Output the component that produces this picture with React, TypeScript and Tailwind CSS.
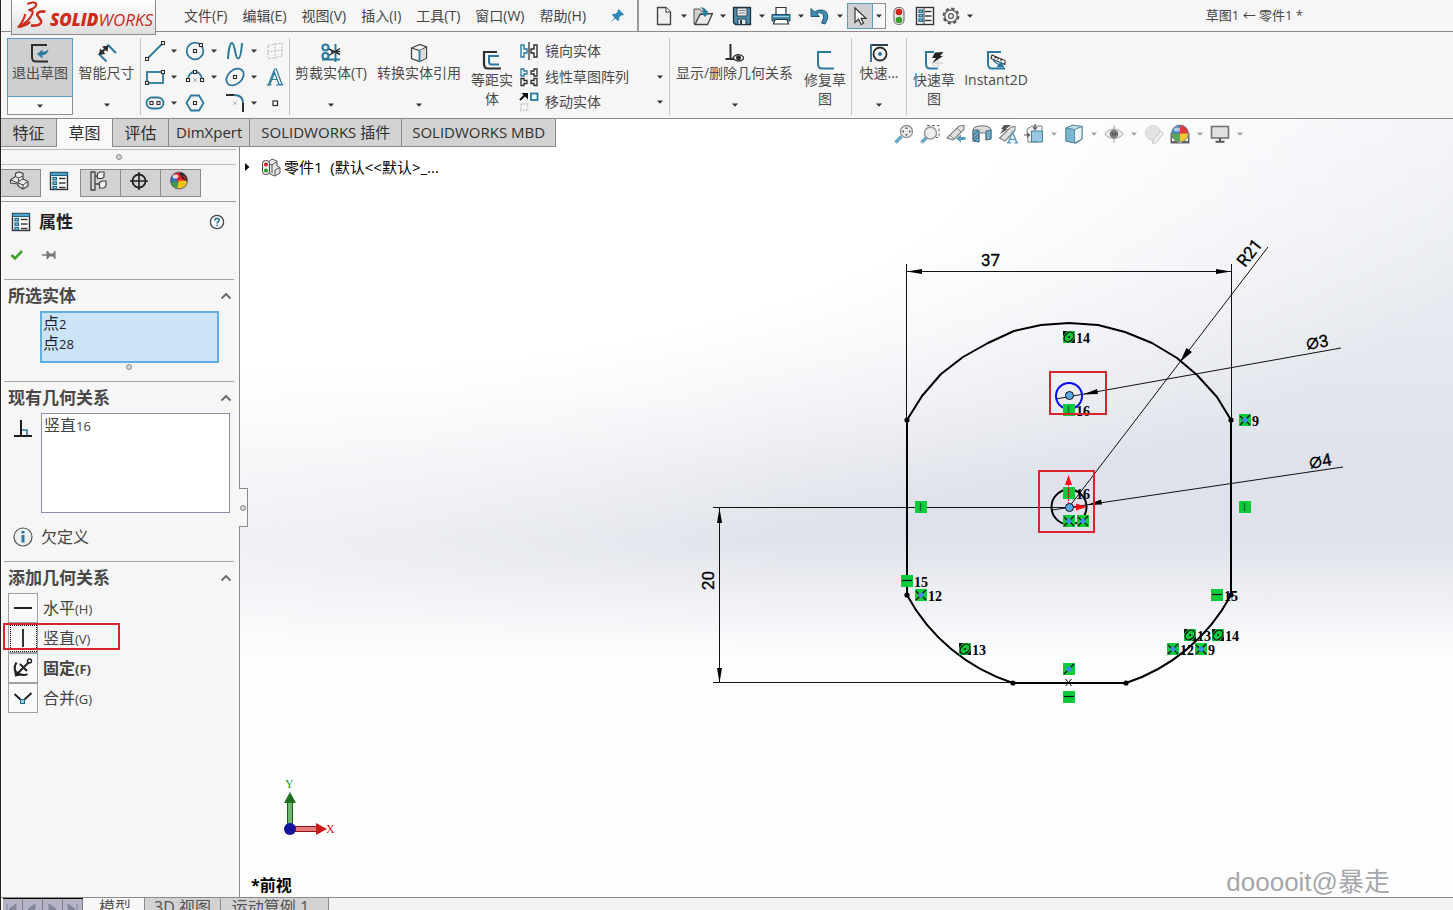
import React from "react";

const BLUE = "#2b7a9e";
const INK = "#2d2d2d";

type IconProps = { w?: number; h?: number; box?: string; children: React.ReactNode };

function Svg({ w = 20, h = 20, box, children }: IconProps) {
  return (
    <svg width={w} height={h} viewBox={box ?? `0 0 ${w} ${h}`} fill="none" aria-hidden="true" className="shrink-0">
      {children}
    </svg>
  );
}

function Caret({ light = false }: { light?: boolean }) {
  return (
    <svg width="6" height="4" viewBox="0 0 6 4" aria-hidden="true" className="shrink-0">
      <path d="M0 0.5h6L3 3.8z" fill={light ? "#9a9a9a" : "#333"} />
    </svg>
  );
}

function Handle({ x, y }: { x: number; y: number }) {
  return <rect x={x - 1.5} y={y - 1.5} width="3" height="3" fill="#fff" stroke={INK} strokeWidth="1.1" />;
}

/* ---------- quick access icons ---------- */

const NewIcon = () => (
  <Svg>
    <path d="M3.5 1.500h8.500l4.500 4.500v12.500h-13z" fill="#efefef" stroke="#444" strokeWidth="1.400" />
    <path d="M12 1.500v4.500h4.500" stroke="#444" strokeWidth="1.100" fill="#fff" />
  </Svg>
);
const OpenIcon = () => (
  <Svg>
    <path d="M1 3h6l1.500 2H14v3H7L2.500 18H1z" fill="#cfcfcf" stroke="#555" />
    <path d="M2 18.500 7 8.500l12.500-1-5 11z" fill="#ececec" stroke="#444" strokeWidth="1.300" />
    <path d="M7 1.500c4-.5 6.500 1.500 6.500 5H16l-4 4.500-4-4.500h2.500c0-2.500-1-3.800-3.500-5z" fill={BLUE} />
  </Svg>
);
const SaveIcon = () => (
  <Svg>
    <path d="M1.500 1.500h17v17h-15l-2-2z" fill="#4b8fae" stroke="#222e38" strokeWidth="1.300" />
    <rect x="5" y="2" width="10" height="8" fill="#eef2f4" stroke="#2a3d4a" />
    <path d="M6.500 4.500h7M6.500 7h7" stroke="#777" />
    <rect x="6" y="13" width="8" height="5.500" fill="#dfe6ea" stroke="#2a3d4a" />
    <rect x="8" y="14" width="2" height="4" fill="#2a3d4a" />
  </Svg>
);
const PrintIcon = () => (
  <Svg>
    <path d="M5 1.500h10v7H5z" fill="#fff" stroke="#333" strokeWidth="1.200" />
    <path d="M1 8.500h18v6.500H1z" fill="#3d87aa" stroke="#1f4a60" />
    <path d="M2 10.500h16" stroke="#9ed0e6" />
    <path d="M4 13.500h12l1.500 4.500h-15z" fill="#fff" stroke="#333" strokeWidth="1.200" />
  </Svg>
);
const UndoIcon = () => (
  <Svg>
    <path d="M1 2.500v8h8.500L6.500 7.500c4.500-2 8.500.5 6.500 6L11.500 17l3.500 1c4.500-6.500 3.500-14-4-14-2.500 0-4.500.8-6.500 2z" fill="#3f8db1" stroke="#1e5672" />
  </Svg>
);
const CursorIcon = () => (
  <Svg>
    <path d="M5 2v14.500l3.500-3.200 2.600 5.200 2.400-1.200-2.500-5H16z" fill="#fff" stroke="#333" strokeWidth="1.200" />
  </Svg>
);
const TrafficIcon = () => (
  <Svg>
    <rect x="5" y="1.500" width="10" height="17" rx="4.500" fill="#e9e9e9" stroke="#777" strokeWidth="1.200" />
    <circle cx="10" cy="6" r="3.300" fill="#d0271d" />
    <circle cx="10" cy="14" r="3.300" fill="#3d9a2f" />
  </Svg>
);
function ListIcon({ blueTop = false }: { blueTop?: boolean }) {
  return (
    <Svg>
      <rect x="1.500" y="1.500" width="17" height="17" fill="#fafafa" stroke="#333" strokeWidth="1.400" />
      {blueTop ? <path d="M1.500 1.500h17v3h-17z" fill="#4ea3c6" stroke="#22607c" /> : <path d="M9 2v16" stroke="#333" />}
      {[5, 9.5, 14].map((y) => (
        <g key={y}>
          <rect x="4" y={y + (blueTop ? 1.5 : -1)} width="3.500" height="2.400" fill="#9ed0e6" stroke="#1f6b8c" strokeWidth="1.200" />
          <path d={`M10 ${y + (blueTop ? 2.5 : 0.5)}h6.500`} stroke="#333" strokeWidth="1.400" />
        </g>
      ))}
    </Svg>
  );
}
const GearIcon = () => (
  <Svg>
    <circle cx="10" cy="10" r="7.400" stroke="#555" strokeWidth="2" strokeDasharray="3.300 2.510" />
    <circle cx="10" cy="10" r="6.200" stroke="#555" strokeWidth="1.200" fill="#f5f5f5" />
    <circle cx="10" cy="10" r="2.400" stroke="#555" strokeWidth="1.200" />
  </Svg>
);

/* ---------- ribbon icons ---------- */

const ExitSketchIcon = () => (
  <Svg>
    <path d="M17 2H2v12c0 3 1 4.500 4 4.500h12" stroke={INK} strokeWidth="2" />
    <path d="M18.500 6c-.5 4-2.500 6-6 6v3.500L7 11l5.500-4.500V9c2.500 0 4-.8 6-3z" fill={BLUE} />
  </Svg>
);
const DimensionIcon = () => (
  <Svg>
    <path d="M10.500 1.500 19 10M1.500 10.500l8 8" stroke={BLUE} strokeWidth="2" />
    <path d="m4 10 6-6" stroke={INK} strokeWidth="2.400" />
    <path d="M11.500 2.500 10.500 9 5 3.500zM2 12l1-6.500L8.500 11z" fill={INK} />
  </Svg>
);
const LineIcon = () => (
  <Svg>
    <path d="M2 18 18 2" stroke={BLUE} strokeWidth="1.800" />
    <Handle x={2} y={18} />
    <Handle x={18} y={2} />
  </Svg>
);
const CircleIcon = () => (
  <Svg>
    <circle cx="10" cy="10" r="8.300" stroke={BLUE} strokeWidth="1.800" />
    <Handle x={10} y={10} />
    <Handle x={16} y={4} />
  </Svg>
);
const SplineIcon = () => (
  <Svg>
    <path d="M3 18C3.500 9 5 2 7 2c3 0 3 15.500 6 15.500 2.500 0 3.500-8 4-15.500" stroke={BLUE} strokeWidth="2" />
  </Svg>
);
const PlaneIcon = () => (
  <Svg>
    <path d="M3 4.500 17 2v13L3 18zM10 2v16M2 11l16-2" stroke="#b8b8b8" strokeDasharray="2 1.500" />
  </Svg>
);
const RectIcon = () => (
  <Svg>
    <rect x="2" y="5" width="16" height="11" stroke={BLUE} strokeWidth="1.800" />
    <Handle x={2} y={16} />
    <Handle x={18} y={5} />
  </Svg>
);
const ArcIcon = () => (
  <Svg>
    <path d="M3 13C3 2 17 2 17 13" stroke={BLUE} strokeWidth="1.800" />
    <path d="m8 11 4 4M12 11l-4 4" stroke="#aaa" strokeWidth="1" />
    <Handle x={3} y={13} />
    <Handle x={17} y={13} />
    <Handle x={10} y={5} />
  </Svg>
);
const EllipseIcon = () => (
  <Svg>
    <ellipse cx="10" cy="10" rx="9.800" ry="7" transform="rotate(-42 10 10)" stroke={BLUE} strokeWidth="1.800" />
    <Handle x={10} y={10} />
  </Svg>
);
const LetterAIcon = () => (
  <Svg>
    <path d="M1.500 18h5M11 18h7.500M3.500 17.500 9.500 2h1.800L17 17.500h-3L9.500 5.500 5 17.500zM6.500 12.500h6" stroke={BLUE} strokeWidth="1.200" />
  </Svg>
);
const SlotIcon = () => (
  <Svg>
    <rect x="1.500" y="4.500" width="17" height="11" rx="5.500" stroke={BLUE} strokeWidth="1.800" />
    <Handle x={6.5} y={10} />
    <Handle x={13.5} y={10} />
  </Svg>
);
const PolygonIcon = () => (
  <Svg>
    <path d="m6 2.500h8L18.500 10 14 17.500H6L1.500 10z" stroke={BLUE} strokeWidth="1.800" />
    <Handle x={10} y={10} />
  </Svg>
);
const FilletIcon = () => (
  <Svg>
    <path d="M1 2h8" stroke={INK} strokeWidth="2" />
    <path d="M9 2c6 0 9 3 9 8" stroke={BLUE} strokeWidth="2" />
    <path d="M18 10v9" stroke={INK} strokeWidth="2" />
    <path d="m8 8 4 4m0-4-4 4" stroke="#bbb" />
  </Svg>
);
const PointIcon = () => (
  <Svg>
    <rect x="8" y="8" width="4.500" height="4.500" fill="#fff" stroke={INK} strokeWidth="1.200" />
  </Svg>
);
const TrimIcon = () => (
  <Svg>
    <path d="M1 16.500h18M14.500 1v18" stroke={BLUE} strokeWidth="2" />
    <path d="m7 5.500 12 6M7 13l12-7.500M10 9l9-.5" stroke={INK} strokeWidth="1.400" />
    <circle cx="4.500" cy="4.500" r="3" stroke={BLUE} strokeWidth="2.200" />
    <circle cx="4.500" cy="13" r="3" stroke={BLUE} strokeWidth="2.200" fill="#f6f6f6" />
  </Svg>
);
const CubeIcon = () => (
  <Svg>
    <path d="M2.500 5 11 1.500 17.500 4v11l-7 3.500-8-3z" fill="#f4f4f4" stroke="#444" strokeWidth="1.300" />
    <path d="m2.500 5 8 2.500L17.500 4" stroke="#444" strokeWidth="1.200" />
    <path d="M10.500 7.500V18l6.500-3V5z" fill="#dcdcdc" />
    <path d="M10.500 7.500v11" stroke={BLUE} strokeWidth="1.800" />
  </Svg>
);
const OffsetIcon = () => (
  <Svg>
    <path d="M15 2H2v12c0 3 1 4.500 4 4.500h13" stroke={INK} strokeWidth="2.200" />
    <path d="M17 6H7v5.500c0 2 .5 3 2.500 3H17" stroke={BLUE} strokeWidth="2" />
  </Svg>
);
const MirrorIcon = () => (
  <Svg>
    <path d="M2 4h3v4h3v4H5v4H2z" stroke={BLUE} strokeWidth="1.400" />
    <path d="M10 1v18" stroke="#222" strokeWidth="1.200" />
    <path d="M18 4h-3v4h-3v4h3v4h3z" stroke={INK} strokeWidth="1.400" />
  </Svg>
);
const PatternIcon = () => (
  <Svg>
    <path d="M2 2h3v2h3v3H5v2H2z" stroke={BLUE} strokeWidth="1.300" />
    <path d="M18 2h-3v2h-3v3h3v2h3zM2 11.500h3v2h3v3H5v2H2zM18 11.500h-3v2h-3v3h3v2h3z" stroke={INK} strokeWidth="1.300" />
  </Svg>
);
const MoveIcon = () => (
  <Svg>
    <path d="m1 8 5-5" stroke="#111" strokeWidth="2" />
    <path d="M2.500 1H9v6.500z" fill="#111" />
    <rect x="12" y="1.500" width="6.500" height="6.500" stroke={BLUE} strokeWidth="1.800" />
    <rect x="2" y="12" width="6.500" height="6.500" stroke="#c0c0c0" strokeWidth="1.500" strokeDasharray="1.500 1.200" />
  </Svg>
);
const RelationsIcon = () => (
  <Svg>
    <path d="M6.500 1v15.500M1.500 16h9" stroke={INK} strokeWidth="2" />
    <path d="M9 15c2.500-4.500 8.500-4.500 11 0-2.500 4-8.500 4-11 0z" fill="#fff" stroke={INK} strokeWidth="1.300" />
    <circle cx="14.500" cy="14.800" r="2.500" fill={INK} />
  </Svg>
);
const RepairIcon = () => (
  <Svg>
    <path d="M16 2H3v12c0 3 1 4.500 4 4.500h12" stroke={BLUE} strokeWidth="2" />
  </Svg>
);
const SnapIcon = () => (
  <Svg>
    <path d="M1 2h18M2 2v17" stroke={BLUE} strokeWidth="2" />
    <path d="M3 2h16" stroke={INK} strokeWidth="1.500" />
    <circle cx="11" cy="11" r="6.500" stroke={INK} strokeWidth="1.800" />
    <circle cx="11" cy="11" r="2" fill={BLUE} />
  </Svg>
);
const RapidIcon = () => (
  <Svg>
    <path d="M10 2H2v12c0 3 1 4.500 4 4.500h8" stroke={BLUE} strokeWidth="2" />
    <path d="M10 18v-5h9M14 10v9" stroke="#ccc" />
    <path d="M11 2.500 19.500 2l-3.500 4h3L8 13.500l4-5.500H8z" fill="#222" />
  </Svg>
);
const InstantIcon = () => (
  <Svg>
    <path d="M15 2H2v12c0 3 1 4.500 4 4.500h13" stroke={BLUE} strokeWidth="2" />
    <path d="m6 5 13 5.500v4L5 8.500zM9 6.500v2M12 8v2M15 9v2" fill="#fff" stroke={INK} strokeWidth="1.100" />
    <path d="m7 10.500 7 5M12 16.500h5l-2-4z" stroke={BLUE} strokeWidth="1.500" fill={BLUE} />
  </Svg>
);

/* ---------- view toolbar icons ---------- */

const Lens = ({ dashed = false }: { dashed?: boolean }) => (
  <Svg>
    <path d="m1.500 18.500 6-6" stroke="#5da0c0" strokeWidth="3.500" />
    {dashed && <path d="M7 1.500h12v12h-3" stroke="#555" strokeDasharray="3 2" />}
    <circle cx={dashed ? 10.5 : 12.5} cy={dashed ? 9 : 7.5} r="6" fill="#e9ecee" stroke="#8a8a8a" strokeWidth="1.500" />
    {!dashed && <path d="M12.500 2.800 14 5h-3zM12.500 12.200 14 10h-3zM7.800 7.500 10 6v3zM17.200 7.500 15 6v3z" fill="#555" />}
  </Svg>
);
const PreviousViewIcon = () => (
  <Svg>
    <path d="M1 14 13 2l5-.5v4L7 16z" fill="#ddd" stroke="#777" strokeWidth="1.200" />
    <path d="m4 11 4 4M11 4l4 4" stroke="#777" />
    <path d="M10 14.500 15 10.500v2.500h4.500v3H15v2.500z" fill="#4a93b6" />
  </Svg>
);
const SectionIcon = () => (
  <Svg>
    <path d="M1 5.500C1 .5 19 .5 19 5.500V15l-5 1V9H7v9l-6-1z" fill="#d4d7d9" stroke="#666" />
    <path d="M1 6h6v12l-6-1zM14 7l5-1v9l-5 1z" fill="#5ea6c6" stroke="#335f75" />
    <path d="m1 11 5-4M1 15l6-5M2 17l5-4" stroke="#224a5c" />
  </Svg>
);
const DynamicIcon = () => (
  <Svg>
    <path d="M6 1h7L8 5h2L2 10l3-5H3z" fill="#444" />
    <path d="M1.500 14 13 3l4-.5v4L7 17z" fill="#ddd" stroke="#777" strokeWidth="1.200" />
    <path d="m10 19 4.500-11L19 19M11.500 15.500h6M9 18.800h4M16.500 18.800H20" stroke="#4a93b6" strokeWidth="1.500" />
  </Svg>
);
const OrientIcon = () => (
  <Svg>
    <path d="M3 5 8 2h10v12l-4 4H4z" fill="#eceeef" stroke="#777" />
    <path d="M7.500 7h11v11h-11z" fill="#8cc3dd" stroke="#39718b" />
    <path d="M11 0v5M9 3l2 2.500L13 3M0 11h5M3 9l2.500 2L3 13" stroke="#444" strokeWidth="1.200" />
  </Svg>
);
const DisplayStyleIcon = () => (
  <Svg>
    <path d="M2 4 9 1l9 1.500V15l-6 4-10-2z" fill="#b9dcea" stroke="#4b7c91" strokeWidth="1.200" />
    <path d="M2 4l8.500 1.500V19L2 17z" fill="#6db0ce" stroke="#4b7c91" />
    <path d="M10.500 5.500 18 2.500V15l-7.500 4z" fill="#e8f2f6" stroke="#4b7c91" />
  </Svg>
);
const EyeIcon = () => (
  <Svg>
    <path d="M1 10c4-6.500 14-6.500 18 0-4 6-14 6-18 0z" fill="#eee" stroke="#999" />
    <circle cx="10" cy="10" r="4.300" fill="#666" />
    <circle cx="10" cy="10" r="1.800" fill="#222" />
    <path d="M10 1.500v17" stroke="#888" />
  </Svg>
);
const AppearanceIcon = () => (
  <Svg>
    <circle cx="9" cy="9" r="7.500" fill="#e0e1e3" stroke="#d0d0d0" />
    <path d="m9 16 7.500-9 3 2.500-7.500 9-3.500 1z" fill="#eee" stroke="#c0c0c0" />
  </Svg>
);
function SceneIcon() {
  return (
    <Svg>
      <path d="M.5 9h19v10.500H.5z" fill="#555" />
      <path d="M2 14h3v3H2zM8 16h4v2.500H8zM15 14h3v3h-3z" fill="#fff" />
      <path d="M10 9.500V1a8.500 8.500 0 0 0-8.500 8.500z" fill="#3b7bc8" />
      <path d="M10 9.500V1a8.500 8.500 0 0 1 8.500 8.500z" fill="#d8282a" />
      <path d="M10 9.500H1.500A8.500 8.500 0 0 0 10 18z" fill="#43a047" />
      <path d="M10 9.500h8.500A8.500 8.500 0 0 1 10 18z" fill="#f2c21c" />
      <circle cx="10" cy="9.500" r="8.500" stroke="#777" />
      <ellipse cx="7" cy="5.500" rx="3" ry="2" fill="#fff" opacity="0.600" />
    </Svg>
  );
}
function BallIcon() {
  return (
    <Svg>
      <circle cx="10" cy="9.500" r="8.500" fill="#d8282a" />
      <path d="M4 3.500A8.500 8.500 0 0 0 4 15.500L8.500 9z" fill="#2f6fbf" />
      <path d="M2 12.500a8.500 8.500 0 0 0 7 5.500l1-7-5-1z" fill="#3f9b45" />
      <path d="M8 17.800a8.500 8.500 0 0 0 10.500-8L10 9.500z" fill="#f2c21c" />
      <path d="M10.500 1.500c4 0 8 3.500 8 8.500-4-.5-7-4-8-8.500z" fill="#222" />
      <path d="M12.500 4.500c2 .5 4 2.500 4.500 4" stroke="#c33" strokeWidth="1.200" />
      <circle cx="10" cy="9.500" r="8.500" stroke="#666" />
      <ellipse cx="6.500" cy="5.500" rx="2.800" ry="2" fill="#fff" opacity="0.800" />
    </Svg>
  );
}
const MonitorIcon = () => (
  <Svg>
    <rect x="1.500" y="2.500" width="17" height="11.500" fill="#dcdedf" stroke="#666" strokeWidth="1.600" />
    <path d="M10 14v3M5.500 17.800h9" stroke="#444" strokeWidth="2" />
  </Svg>
);

/* ---------- property panel icons ---------- */

const PartIcon = () => (
  <Svg>
    <path d="m1.500 9 5-3.500V2.500L10 1l4 1.500V8l5 2.500V15l-5 3-5-3v-2l-7.500-1z" fill="#ececec" stroke="#444" strokeWidth="1.200" />
    <path d="m6.500 5.500 3 1.500L14 5M9.500 7v3.500L14 8M1.500 9l7.500 3 .5-2M9 12l5 2 5-3.500M14 14v4" stroke="#444" />
  </Svg>
);
const TreeIcon = () => (
  <Svg>
    <path d="M2 1v18h4V1zM6 5h4M6 13h5" stroke="#444" strokeWidth="1.300" />
    <path d="M8.500 2.500 11 1h4v5l-2 1.500H8.500zM10.500 11.500 13 10h4v5l-2 2h-4.500z" fill="#f4f4f4" stroke="#444" strokeWidth="1.200" />
  </Svg>
);
const TargetIcon = () => (
  <Svg>
    <circle cx="10" cy="10" r="6.500" stroke="#222" strokeWidth="1.800" />
    <path d="M10 1v18M1 10h18" stroke="#222" strokeWidth="1.600" />
  </Svg>
);
const HelpIcon = () => (
  <Svg w={16} h={16}>
    <circle cx="8" cy="8" r="6.600" fill="#fff" stroke="#444" strokeWidth="1.300" />
    <path d="M5.800 6.500C5.800 3.500 10.200 3.700 10.200 6.200 10.200 7.800 8 7.800 8 9.500M8 10.800v1.500" stroke={BLUE} strokeWidth="1.700" />
  </Svg>
);
const CheckIcon = () => (
  <Svg w={14} h={12}>
    <path d="m1.500 6 3.500 3.500L12 2" stroke="#3fa02b" strokeWidth="2.600" />
  </Svg>
);
const PushpinIcon = () => (
  <Svg w={14} h={12}>
    <path d="M0 6h5" stroke="#777" strokeWidth="1.500" />
    <path d="M4.500 2H6l1.500 2.500H11L12.500 2h1v8h-1L11 7.500H7.500L6 10H4.500z" fill="#777" />
  </Svg>
);
const Chevron = () => (
  <Svg w={12} h={8}>
    <path d="m1.500 6.500 4.500-4.500 4.500 4.500" stroke="#666" strokeWidth="1.800" />
  </Svg>
);
const PerpIcon = () => (
  <Svg>
    <path d="M8 2v16M1 18h18" stroke="#1c1c1c" strokeWidth="2" />
    <path d="M9 12h5v5" stroke={BLUE} strokeWidth="1.600" />
  </Svg>
);
const InfoIcon = () => (
  <Svg>
    <circle cx="10" cy="10" r="9" fill="#eef0f1" stroke="#555" strokeWidth="1.200" />
    <path d="M10 8v7.500M10 4v2.500" stroke={BLUE} strokeWidth="3" />
  </Svg>
);
const HorizIcon = () => (
  <Svg>
    <path d="M1 10h18" stroke="#222" strokeWidth="2" />
  </Svg>
);
const VertIcon = () => (
  <Svg>
    <path d="M10 1v18" stroke="#333" strokeWidth="2" />
  </Svg>
);
const AnchorIcon = () => (
  <Svg>
    <path d="M5 15 16 4M7 6l7 7" stroke="#222" strokeWidth="2" />
    <circle cx="16.500" cy="3" r="2" stroke="#222" strokeWidth="1.400" />
    <path d="M3.500 4.500C0 10 2 14 5 15.500s7 2 9.500.5" stroke="#222" strokeWidth="2" />
    <path d="M1 11.500 2 18.500l6-1z" fill="#222" />
  </Svg>
);
const MergeIcon = () => (
  <Svg>
    <path d="m1.500 6 8 7.500 9-8.500" stroke="#222" strokeWidth="2" />
    <rect x="7.500" y="11.500" width="4" height="4" fill="#8fd0f0" stroke="#1f6b8c" />
  </Svg>
);

/* ---------- header ---------- */

function Logo() {
  return (
    <div className="relative z-20 ml-[10px] flex h-[35px] w-[145px] shrink-0 items-center gap-1 self-start border border-t-0 border-[#8a8a8a] bg-linear-to-b from-white to-[#dedede] pb-[4px] pl-[5px] text-[#cf2a1e]">
      <svg width="29" height="29" viewBox="0 0 28 28" fill="none" aria-hidden="true" className="shrink-0">
        <path d="M10 3c4-2.500 9.500-2 8.500 1-.6 2-4 4-7.500 5 3-.2 5 .6 3.800 3.400C13.500 17 6 23 1 25.500c4-4.500 6-8.500 7-13" stroke="#cf2a1e" strokeWidth="2" />
        <path d="M2 25c3.500-1 8-1.800 10.500-5" stroke="#cf2a1e" strokeWidth="2.400" />
        <path d="M27.500 10.500c-3-1.200-8 0-8 2.500 0 2.500 5 5 3.600 8-1.200 2.400-5.600 3-9.600 2.600" stroke="#cf2a1e" strokeWidth="2.500" />
      </svg>
      <span className="pt-[8px] font-['Open_Sans',sans-serif] text-[17px] leading-none italic">
        <b className="font-extrabold">SOLID</b>
        <span className="font-normal">WORKS</span>
      </span>
    </div>
  );
}

const MENUS = ["文件(F)", "编辑(E)", "视图(V)", "插入(I)", "工具(T)", "窗口(W)", "帮助(H)"];

const QUICK = [
  { name: "新建", icon: <NewIcon /> },
  { name: "打开", icon: <OpenIcon /> },
  { name: "保存", icon: <SaveIcon /> },
  { name: "打印", icon: <PrintIcon /> },
  { name: "撤消", icon: <UndoIcon /> },
];

function TitleBar() {
  return (
    <header className="flex h-8 shrink-0 items-stretch border-b border-[#8a8a8a] bg-[#f6f6f6]">
      <Logo />
      <nav className="flex w-[481px] shrink-0 items-center gap-[15px] pl-7 text-sm text-[#444]">
        {MENUS.map((m) => (
          <button key={m} type="button" className="whitespace-nowrap">
            {m}
          </button>
        ))}
        <button type="button" aria-label="固定菜单" className="ml-2 shrink-0">
          <Svg w={16} h={16}>
            <path d="M9.500 1 15 6.500l-1.500 1-1-.3-2.300 2.300c.3 1.500 0 2.700-1 3.800L6.300 10.400 1.500 14.500l4.100-4.800L2.800 6.800c1.100-1 2.300-1.300 3.800-1L8.900 3.500l-.3-1z" fill="#2f86b0" />
          </Svg>
        </button>
      </nav>
      <div className="flex min-w-0 flex-1 items-center border-l-2 border-[#9a9a9a] pl-[14px]">
        {QUICK.map((q) => (
          <div key={q.name} className="flex w-[39px] shrink-0 items-center">
            <button type="button" aria-label={q.name} className="flex w-[22px] justify-center">
              {q.icon}
            </button>
            <button type="button" aria-label={q.name + "选项"} className="flex w-[17px] justify-center">
              <Caret />
            </button>
          </div>
        ))}
        <div className="-ml-[1px] flex h-[26px] w-[39px] shrink-0 border border-[#8f8f8f]">
          <button type="button" aria-label="选择" className="-m-px flex w-[26px] items-center justify-center border border-[#5b9cc0] bg-[#cfcfcf]">
            <CursorIcon />
          </button>
          <button type="button" aria-label="选择选项" className="flex flex-1 items-center justify-center">
            <Caret />
          </button>
        </div>
        <button type="button" aria-label="重建模型" className="flex w-[26px] justify-center">
          <TrafficIcon />
        </button>
        <button type="button" aria-label="文件属性" className="flex w-[26px] justify-center">
          <ListIcon />
        </button>
        <button type="button" aria-label="选项" className="flex w-[26px] justify-center">
          <GearIcon />
        </button>
        <button type="button" aria-label="更多选项" className="flex w-3 justify-center">
          <Caret />
        </button>
        <h1 className="flex-1 pr-[150px] text-right text-[13px] whitespace-nowrap text-[#444]">草图1 ← 零件1 *</h1>
      </div>
    </header>
  );
}

/* ---------- ribbon ---------- */

type BigProps = { label: string; icon: React.ReactNode; width: string; caret?: boolean; low?: boolean };

function BigButton({ label, icon, width, caret = false, low = false }: BigProps) {
  return (
    <div className={`flex shrink-0 flex-col items-center ${width}`}>
      <button type="button" className={`flex flex-col items-center text-sm text-[#4a4a4a] ${low ? "pt-3" : "pt-[5px]"}`}>
        {icon}
        <span className="leading-[19px]">{label}</span>
      </button>
      {caret && (
        <button type="button" aria-label={label + "选项"} className="mt-auto flex h-5 items-center">
          <Caret />
        </button>
      )}
    </div>
  );
}

const Divider = () => <div className="w-px shrink-0 bg-[#c4c4c4]" />;

const TOOLS: { name: string; icon: React.ReactNode; more: boolean }[] = [
  { name: "直线", icon: <LineIcon />, more: true },
  { name: "圆", icon: <CircleIcon />, more: true },
  { name: "样条曲线", icon: <SplineIcon />, more: true },
  { name: "基准面", icon: <PlaneIcon />, more: false },
  { name: "矩形", icon: <RectIcon />, more: true },
  { name: "圆弧", icon: <ArcIcon />, more: true },
  { name: "椭圆", icon: <EllipseIcon />, more: true },
  { name: "文字", icon: <LetterAIcon />, more: false },
  { name: "槽口", icon: <SlotIcon />, more: true },
  { name: "多边形", icon: <PolygonIcon />, more: false },
  { name: "圆角", icon: <FilletIcon />, more: true },
  { name: "点", icon: <PointIcon />, more: false },
];

const ROWS = [
  { label: "镜向实体", icon: <MirrorIcon />, more: false },
  { label: "线性草图阵列", icon: <PatternIcon />, more: true },
  { label: "移动实体", icon: <MoveIcon />, more: true },
];

function Ribbon() {
  return (
    <section className="flex h-[87px] shrink-0 items-stretch border-b border-[#8a8a8a] bg-[#f6f6f6] pt-[6px] pb-[3px] pl-[6px]">
      <div className="flex w-[66px] shrink-0 flex-col">
        <button type="button" className="flex h-[59px] flex-col items-center border border-[#5b9cc0] bg-[#cfcfcf] pt-1 text-sm text-[#4a4a4a]">
          <ExitSketchIcon />
          <span className="leading-[19px]">退出草图</span>
        </button>
        <button type="button" aria-label="退出草图选项" className="flex flex-1 items-center justify-center border border-t-0 border-[#8f8f8f] bg-[#fafafa]">
          <Caret />
        </button>
      </div>
      <BigButton label="智能尺寸" icon={<DimensionIcon />} width="w-[67px]" caret />
      <Divider />
      <div className="grid w-[148px] shrink-0 grid-cols-[repeat(4,40px)] content-between pl-1">
        {TOOLS.map((t) => (
          <div key={t.name} className="flex h-[26px] items-center">
            <button type="button" aria-label={t.name} className="w-5">
              {t.icon}
            </button>
            {t.more && (
              <button type="button" aria-label={t.name + "选项"} className="flex w-[18px] justify-center">
                <Caret />
              </button>
            )}
          </div>
        ))}
      </div>
      <Divider />
      <BigButton label="剪裁实体(T)" icon={<TrimIcon />} width="w-[82px]" caret />
      <BigButton label="转换实体引用" icon={<CubeIcon />} width="w-[94px]" caret />
      <BigButton label="等距实体" icon={<OffsetIcon />} width="w-[52px] px-[5px]" low />
      <div className="flex w-[151px] shrink-0 flex-col justify-between pl-px">
        {ROWS.map((r) => (
          <div key={r.label} className="flex h-[26px] items-center justify-between pr-[6px]">
            <button type="button" className="flex items-center gap-[6px] text-sm text-[#4a4a4a]">
              {r.icon}
              {r.label}
            </button>
            {r.more && (
              <button type="button" aria-label={r.label + "选项"}>
                <Caret />
              </button>
            )}
          </div>
        ))}
      </div>
      <Divider />
      <BigButton label="显示/删除几何关系" icon={<RelationsIcon />} width="w-[129px]" caret />
      <BigButton label="修复草图" icon={<RepairIcon />} width="w-[52px] px-[5px]" low />
      <Divider />
      <BigButton label="快速..." icon={<SnapIcon />} width="w-[54px]" caret />
      <Divider />
      <BigButton label="快速草图" icon={<RapidIcon />} width="w-[54px] px-[6px]" low />
      <BigButton label="Instant2D" icon={<InstantIcon />} width="w-[70px]" low />
    </section>
  );
}

/* ---------- command tabs ---------- */

const TABS = [
  { label: "特征", size: "w-14 text-base" },
  { label: "草图", size: "w-14 text-base" },
  { label: "评估", size: "w-14 text-base" },
  { label: "DimXpert", size: "px-[7px] text-[15px]" },
  { label: "SOLIDWORKS 插件", size: "px-[11px] text-[15px]" },
  { label: "SOLIDWORKS MBD", size: "px-[10px] text-[15px]" },
];

function CommandTabs() {
  return (
    <div role="tablist" className="z-10 col-span-2 col-start-1 row-start-1 flex w-max text-[#2f2f2f]">
      {TABS.map((t, i) => (
        <button
          key={t.label}
          type="button"
          role="tab"
          aria-selected={i === 1}
          className={`border-r border-[#8a8a8a] whitespace-nowrap ${t.size} ${i === 1 ? "bg-[#f9f9f9]" : "border-b bg-[#d2d2d2]"}`}
        >
          {t.label}
        </button>
      ))}
    </div>
  );
}

/* ---------- property manager ---------- */

function Dot() {
  return <span className="block size-[6px] rounded-full border border-[#8a8a8a] bg-[#d6d6d6]" />;
}

function SectionTitle({ children }: { children: React.ReactNode }) {
  return (
    <button type="button" className="flex h-[31px] w-full items-center justify-between pr-[2px] pl-1 text-[17px] font-bold text-[#484848]">
      {children}
      <Chevron />
    </button>
  );
}

const RELATIONS = [
  { label: "水平", key: "(H)", icon: <HorizIcon />, bold: false, marked: false },
  { label: "竖直", key: "(V)", icon: <VertIcon />, bold: false, marked: true },
  { label: "固定", key: "(F)", icon: <AnchorIcon />, bold: true, marked: false },
  { label: "合并", key: "(G)", icon: <MergeIcon />, bold: false, marked: false },
];

const PANEL_TABS = [
  { name: "设计树", icon: <PartIcon /> },
  { name: "属性管理器", icon: <ListIcon blueTop /> },
  { name: "配置", icon: <TreeIcon /> },
  { name: "尺寸专家", icon: <TargetIcon /> },
  { name: "外观", icon: <BallIcon /> },
];

function PropertyPanel() {
  return (
    <aside className="relative z-10 col-start-1 row-start-2 border-r border-[#8a8a8a] bg-[#f6f6f6] pt-[2px]">
      <div className="mr-[3px] flex h-4 items-center justify-center border-y border-[#bdbdbd]">
        <Dot />
      </div>
      <div className="mt-1 mr-[3px] border-b border-[#9e9e9e] pb-[4px]">
        <div role="tablist" className="flex">
          {PANEL_TABS.map((t, i) => (
            <button
              key={t.name}
              type="button"
              role="tab"
              aria-label={t.name}
              aria-selected={i === 1}
              className={`flex h-7 w-10 items-center justify-center border-r pr-[3px] pb-1 ${i === 1 ? "border-[#8a8a8a]" : "border-y border-[#8a8a8a] bg-[#d2d2d2]"}`}
            >
              {t.icon}
            </button>
          ))}
        </div>
      </div>
      <div className="flex h-10 items-center pr-[14px] pl-[10px]">
        <ListIcon blueTop />
        <h2 className="flex-1 pl-2 text-[17px] font-bold text-[#1e1e1e]">属性</h2>
        <button type="button" aria-label="帮助">
          <HelpIcon />
        </button>
      </div>
      <div className="flex h-[26px] items-center gap-[18px] pl-[9px]">
        <button type="button" aria-label="确定">
          <CheckIcon />
        </button>
        <button type="button" aria-label="保持可见">
          <PushpinIcon />
        </button>
      </div>

      <section className="mt-[11px] mr-[5px] ml-[3px] border-t border-[#a6a6a6]">
        <SectionTitle>所选实体</SectionTitle>
        <ul className="mr-[15px] ml-9 h-[52px] border-2 border-[#5fb0e0] bg-[#cce4f7] pl-px text-base leading-5 text-[#222]">
          <li className="h-5">
            点<span className="text-[13px]">2</span>
          </li>
          <li className="h-5">
            点<span className="text-[13px]">28</span>
          </li>
        </ul>
        <div className="flex h-[18px] justify-center pt-px pl-[19px]">
          <Dot />
        </div>
      </section>

      <section className="mr-[5px] ml-[3px] border-t border-[#a6a6a6]">
        <SectionTitle>现有几何关系</SectionTitle>
        <div className="flex items-start pl-[9px]">
          <div className="w-7 pt-[5px]">
            <PerpIcon />
          </div>
          <ul className="mr-1 h-[100px] flex-1 border border-[#8a8fa3] bg-white pl-[2px] text-base leading-[22px] text-[#444]">
            <li>
              竖直<span className="text-[13px]">16</span>
            </li>
          </ul>
        </div>
        <p className="flex h-12 items-center gap-2 pl-[9px] text-base text-[#444]">
          <InfoIcon />
          欠定义
        </p>
      </section>

      <section className="mr-[5px] ml-[3px] border-t border-[#a6a6a6]">
        <SectionTitle>添加几何关系</SectionTitle>
        <div className="flex flex-col pl-1">
          {RELATIONS.map((r) => (
            <button key={r.label} type="button" className="relative flex h-[30px] items-center gap-[5px] text-left text-[#444]">
              <span className="flex h-[30px] w-[30px] items-center justify-center border border-[#a0a0a0] bg-[#fafafa]">
                <span className={`flex size-[27px] items-center justify-center ${r.marked ? "border border-dotted border-black" : ""}`}>{r.icon}</span>
              </span>
              <span className={`text-base leading-5 ${r.bold ? "font-bold" : ""}`}>
                {r.label}
                <span className="text-[13px]">{r.key}</span>
              </span>
              {r.marked && <span className="absolute top-0 -left-[5px] h-[27px] w-[117px] border-2 border-[#d9242b]" />}
            </button>
          ))}
        </div>
      </section>

      <button type="button" aria-label="折叠面板" className="absolute top-[341px] -right-[9px] flex h-[39px] w-[9px] items-center justify-center border border-l-0 border-[#8a8a8a] bg-[#f6f6f6]">
        <Dot />
      </button>
    </aside>
  );
}

/* ---------- sketch ---------- */

type MarkKind = "circle" | "vertical" | "horizontal" | "cross" | "slash";

function Mark({ x, y, kind, n }: { x: number; y: number; kind: MarkKind; n?: string }) {
  return (
    <g>
      <rect x={x} y={y} width="12" height="12" fill="#0bcb3b" />
      {kind === "circle" && (
        <>
          <path d={`M${x} ${y}h4l-4 5zM${x + 12} ${y + 12}h-4l4-5z`} fill="#111" />
          <ellipse cx={x + 6} cy={y + 6} rx="5.500" ry="4" transform={`rotate(-45 ${x + 6} ${y + 6})`} fill="none" stroke="#111" strokeWidth="1.300" />
          <circle cx={x + 6} cy={y + 6} r="1.100" fill="#111" />
        </>
      )}
      {kind === "vertical" && <path d={`M${x + 5.5} ${y + 2}v8`} stroke="#063" strokeWidth="1.400" />}
      {kind === "horizontal" && <path d={`M${x + 1} ${y + 5.5}h10`} stroke="#111" strokeWidth="1.200" />}
      {(kind === "cross" || kind === "slash") && (
        <>
          <path d={`M${x + 1} ${y + 11}l10-10`} stroke="#111" strokeWidth="1.200" />
          {kind === "cross" && <path d={`M${x + 6} ${y + 6}l5 5M${x + 1} ${y + 2}l3 3`} stroke="#111" strokeWidth="1.200" />}
          <circle cx={x + 6} cy={y + 6} r="2.500" fill="#3f8cff" />
        </>
      )}
      {n && (
        <text x={x + 13} y={y + 12} fontSize="14" fontWeight="700" fontFamily="'Liberation Serif', serif">
          {n}
        </text>
      )}
    </g>
  );
}

const MARKS: { x: number; y: number; kind: MarkKind; n?: string }[] = [
  { x: 1063, y: 331, kind: "circle", n: "14" },
  { x: 1063, y: 404, kind: "vertical", n: "16" },
  { x: 1063, y: 487, kind: "vertical", n: "16" },
  { x: 1063, y: 515, kind: "cross" },
  { x: 1077, y: 515, kind: "cross" },
  { x: 1239, y: 414, kind: "cross", n: "9" },
  { x: 1239, y: 501, kind: "vertical" },
  { x: 915, y: 501, kind: "vertical" },
  { x: 901, y: 575, kind: "horizontal", n: "15" },
  { x: 915, y: 589, kind: "cross", n: "12" },
  { x: 1211, y: 589, kind: "horizontal", n: "15" },
  { x: 959, y: 643, kind: "circle", n: "13" },
  { x: 1184, y: 629, kind: "circle", n: "13" },
  { x: 1212, y: 629, kind: "circle", n: "14" },
  { x: 1167, y: 643, kind: "cross", n: "12" },
  { x: 1195, y: 643, kind: "cross", n: "9" },
  { x: 1063, y: 663, kind: "slash" },
  { x: 1063, y: 691, kind: "horizontal" },
];

function Diameter({ x, y, value }: { x: number; y: number; value: string }) {
  return (
    <g transform={`translate(${x} ${y}) rotate(-10)`}>
      <text x="0" y="0">
        <tspan fontSize="22" fontFamily="'DejaVu Sans', sans-serif" strokeWidth="0">
          ⌀
        </tspan>
        <tspan>{value}</tspan>
      </text>
    </g>
  );
}

function Sketch() {
  return (
    <svg viewBox="1 119 1452 778" className="absolute inset-0 h-full w-full" role="img" aria-label="零件草图">
      <g stroke="#111" strokeWidth="1" fill="none">
        <path d="M906.500 264v156M1231.500 264v156M907 271.500h324" />
        <path d="M713 507.500h356M713 682.500h300M719.500 507v176" />
        <path d="M1069 507 1268 247M1056 399l285-51M1052 510l291-43" />
      </g>
      <g fill="#000">
        <path d="M907 271.500l15-2.500v5zM1231 271.500l-15-2.500v5z" />
        <path d="M719.500 508l-2.500 15h5zM719.500 683l-2.500-15h5z" />
        <path d="M1180 362l6.500-14 5.500 4zM1083 394.500l14-5.500 1 5zM1087 505l14-5.500 1 5z" />
      </g>
      <g stroke="#000" strokeWidth="2" fill="none">
        <path d="M907 420 922 396 941 374 963 357 988 343 1014 331 1041 325 1069 323 1098 325 1125 332 1152 343 1177 358 1197 375 1217 397 1231 420V595A184 184 0 0 1 1126 683H1013A184 184 0 0 1 907 595Z" strokeLinejoin="round" />
        <circle cx="1069" cy="507" r="17.500" />
        <circle cx="1069" cy="396" r="13" stroke="#0a0aee" />
      </g>
      {[
        [907, 420],
        [1231, 420],
        [907, 595],
        [1231, 595],
        [1013, 683],
        [1126, 683],
      ].map(([x, y]) => (
        <circle key={`${x}-${y}`} cx={x} cy={y} r="2.600" />
      ))}
      <path d="M1064 682.500h9M1065.500 679l6 7M1071.500 679l-6 7" stroke="#000" />
      {MARKS.map((m) => (
        <Mark key={`${m.x}-${m.y}`} {...m} />
      ))}
      <path d="M1068.500 504V484M1071 507.500h8" stroke="#e11" strokeDasharray="2 1" />
      <path d="M1068.500 475l3.500 10h-7zM1087 507l-11-3.500v7z" fill="#e11" />
      <g fill="#5aa9f5" stroke="#111">
        <circle cx="1069.500" cy="395.500" r="4" />
        <circle cx="1069.500" cy="507.500" r="4" />
      </g>
      <g fill="none" stroke="#d9242b" strokeWidth="2">
        <rect x="1050" y="372" width="56" height="42" />
        <rect x="1039" y="471" width="55" height="61" />
      </g>
      <g fontSize="17" fontFamily="'Liberation Sans Narrow', Roboto, sans-serif" fill="#000" stroke="#000" strokeWidth="0.300">
        <text x="981" y="266">
          37
        </text>
        <text x="0" y="0" transform="translate(714 590) rotate(-90)">
          20
        </text>
        <text x="0" y="0" transform="translate(1245 268) rotate(-52)">
          R21
        </text>
        <Diameter x={1307} y={350} value="3" />
        <Diameter x={1310} y={469} value="4" />
      </g>
      <g>
        <rect x="287.500" y="799" width="5" height="26" fill="#6fb56f" stroke="#1c5c1c" />
        <path d="M290 792l6 11h-12z" fill="#1d6e1d" />
        <rect x="295" y="826.500" width="23" height="5" fill="#e57b7b" stroke="#8e1414" />
        <path d="M327 829l-11-6v12z" fill="#c91a1a" />
        <circle cx="290" cy="829" r="6" fill="#12129a" />
        <g fontSize="12" fontFamily="'Liberation Serif', serif">
          <text x="285" y="788" fill="#1b9a1b">
            Y
          </text>
          <text x="326" y="833" fill="#d42020">
            X
          </text>
        </g>
      </g>
    </svg>
  );
}

const VIEW_TOOLS: { name: string; icon: React.ReactNode; more: boolean }[] = [
  { name: "整屏显示", icon: <Lens />, more: false },
  { name: "局部放大", icon: <Lens dashed />, more: false },
  { name: "上一视图", icon: <PreviousViewIcon />, more: false },
  { name: "剖面视图", icon: <SectionIcon />, more: false },
  { name: "动态注解视图", icon: <DynamicIcon />, more: false },
  { name: "视图定向", icon: <OrientIcon />, more: true },
  { name: "显示样式", icon: <DisplayStyleIcon />, more: true },
  { name: "隐藏项目", icon: <EyeIcon />, more: true },
  { name: "编辑外观", icon: <AppearanceIcon />, more: false },
  { name: "应用布景", icon: <SceneIcon />, more: true },
  { name: "视图设定", icon: <MonitorIcon />, more: true },
];

function Viewport() {
  return (
    <main className="relative col-span-2 col-start-1 row-span-2 row-start-1 overflow-hidden bg-[linear-gradient(to_bottom,transparent_54%,#fdfdfe_69%),linear-gradient(to_right,rgba(255,255,255,0.45)_15%,transparent_55%),radial-gradient(ellipse_85%_58%_at_22%_0%,#ffffff_55%,transparent_100%),linear-gradient(to_bottom,#f1f3f7_0%,#dfe2ea_45%)]">
      <Sketch />
      <div className="absolute top-1 right-[206px] flex h-[22px] items-center opacity-90">
        {VIEW_TOOLS.map((t) => (
          <div key={t.name} className="flex items-center">
            <button type="button" aria-label={t.name} className="flex w-[26px] justify-center">
              {t.icon}
            </button>
            {t.more && (
              <button type="button" aria-label={t.name + "选项"} className="flex w-[14px] justify-center">
                <Caret light />
              </button>
            )}
          </div>
        ))}
      </div>
      <button type="button" className="absolute top-[38px] left-[243px] flex items-center text-[15px] leading-5 text-black">
        <Svg w={6} h={8}>
          <path d="M1 0v8l4.500-4z" fill="#111" />
        </Svg>
        <span className="mr-[3px] ml-[11px]">
          <Svg>
            <path d="m6 6 5-4 5 2v5l3 1.500V16l-5 3-5-2z" fill="#e6e6e6" stroke="#555" />
            <path d="m6 6 5 2 5-3.500M11 8v8M19 10.500 14 13v5.500" stroke="#555" />
            <rect x="1.500" y="3.500" width="7" height="14" rx="3" fill="#eee" stroke="#444" />
            <circle cx="5" cy="7.500" r="2" fill="#c22" />
            <circle cx="5" cy="13.500" r="2" fill="#292" />
          </Svg>
        </span>
        <span className="whitespace-pre">零件1  (默认&lt;&lt;默认&gt;_...</span>
      </button>
      <p className="absolute bottom-0 left-[250px] text-base font-bold text-black">*前视</p>
      <p className="absolute right-[63px] bottom-0 font-['Liberation_Sans','Noto_Sans_CJK_SC',sans-serif] text-[26px] leading-[30px] text-[#a5a7ab]">dooooit@暴走</p>
    </main>
  );
}

/* ---------- bottom tabs ---------- */

const NAV = [
  { name: "第一个", d: "M4 4v10M13 4 6 9l7 5z" },
  { name: "上一个", d: "M12 4 5 9l7 5z" },
  { name: "下一个", d: "m6 4 7 5-7 5z" },
  { name: "最后一个", d: "m5 4 7 5-7 5zM14 4v10" },
];

function BottomTabs() {
  return (
    <footer className="z-10 col-span-2 col-start-1 row-start-3 flex items-start overflow-hidden border-t border-[#8a8a8a] bg-[#f3f3f3] text-base leading-[18px] text-[#555]">
      <div className="ml-[2px] flex h-5 border-t border-black">
        {NAV.map((n) => (
          <button key={n.name} type="button" aria-label={n.name} className="w-5 border-r border-[#7c7c8c] bg-[#b4b4c6]">
            <Svg w={18} h={18}>
              <path d={n.d} fill="#85859b" stroke="#85859b" />
            </Svg>
          </button>
        ))}
      </div>
      <div role="tablist" className="flex">
        <button type="button" role="tab" aria-selected="true" className="w-[61px] bg-[#f8f8f8] pl-[3px]">
          模型
        </button>
        <button type="button" role="tab" aria-selected="false" className="w-[77px] border-x border-[#8a8a8a] bg-[#d2d2d2]">
          3D 视图
        </button>
        <button type="button" role="tab" aria-selected="false" className="w-[108px] border-r border-[#8a8a8a] bg-[#d2d2d2] pr-2">
          运动算例 1
        </button>
      </div>
    </footer>
  );
}

export default function App() {
  return (
    <div className="flex h-screen flex-col overflow-hidden border-l border-[#2a2024] bg-white font-['Open_Sans','Noto_Sans_CJK_SC',sans-serif]">
      <TitleBar />
      <Ribbon />
      <div className="grid min-h-0 flex-1 grid-cols-[239px_minmax(0,1fr)] grid-rows-[28px_minmax(0,1fr)_13px]">
        <Viewport />
        <CommandTabs />
        <PropertyPanel />
        <BottomTabs />
      </div>
    </div>
  );
}
